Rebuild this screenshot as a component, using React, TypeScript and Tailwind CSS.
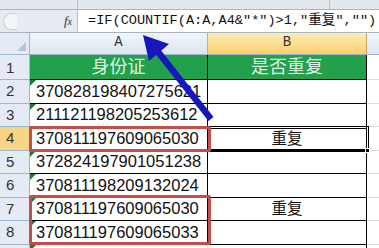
import React from "react";

const rows = [
  { n: 2, id: "370828198407275621", dup: "" },
  { n: 3, id: "211121198205253612", dup: "" },
  { n: 4, id: "370811197609065030", dup: "重复" },
  { n: 5, id: "372824197901051238", dup: "" },
  { n: 6, id: "370811198209132024", dup: "" },
  { n: 7, id: "370811197609065030", dup: "重复" },
  { n: 8, id: "370811197609065033", dup: "" },
];

const sans = { fontFamily: "'Liberation Sans', 'Noto Sans CJK SC', sans-serif" };
const mono = { fontFamily: "'Liberation Mono', 'Noto Sans CJK SC', monospace" };

function Tri() {
  return (
    <div className="absolute left-0 top-0 w-0 h-0 border-t-[6px] border-t-[#1f7a37] border-r-[6px] border-r-transparent" />
  );
}

export default function App() {
  return (
    <div className="relative w-[379px] h-[248px] overflow-hidden bg-white" style={sans}>
      {/* top strip */}
      <div className="flex h-[10px] bg-[#e3e8ee] border-b border-[#a8b4c2]">
        <div className="w-[78px] border-r border-[#b9c3cf]" />
        <div className="w-[252px] border-r border-[#b9c3cf]" />
      </div>

      {/* formula bar */}
      <div className="flex h-[23px] bg-[#e6ebf1] border-b border-[#a8b4c2]">
        <div className="w-[78px] flex items-center border-r border-[#b9c3cf]">
          <div className="ml-[3px] w-[14px] h-[17px] rounded-l-full border-l border-t border-b border-[#c6ced8] bg-[#f3f5f8]" />
          <span className="ml-auto mr-[5px] italic text-[13px] text-[#333]" style={{ fontFamily: "'Liberation Serif', serif" }}>
            f<span className="text-[10px]">x</span>
          </span>
        </div>
        <div className="flex-1 bg-white flex items-center pl-[10px] text-[13.6px] text-[#111] whitespace-nowrap" style={mono}>
          =IF(COUNTIF(A:A,A4&"*")&gt;1,"重复","")
        </div>
      </div>

      {/* column headers */}
      <div className="flex h-[22px] border-b border-[#9eb6ce]">
        <div className="relative w-[30px] bg-[#e4ebf4] border-r border-[#9eb6ce]">
          <div className="absolute right-[3px] bottom-[3px] w-0 h-0 border-b-[9px] border-b-[#b7c3d0] border-l-[9px] border-l-transparent" />
        </div>
        <div className="w-[178px] flex items-end justify-center pb-[1px] bg-gradient-to-b from-[#f1f5fa] to-[#dde6f1] border-r border-[#9eb6ce] text-[14px] text-[#333]" style={mono}>
          A
        </div>
        <div className="w-[159px] flex items-end justify-center pb-[1px] bg-gradient-to-b from-[#fdeeb6] to-[#f8cf68] border-r border-[#c9a55a] text-[14px] text-[#333]" style={mono}>
          B
        </div>
        <div className="flex-1 bg-gradient-to-b from-[#f1f5fa] to-[#dde6f1]" />
      </div>

      {/* row 1 */}
      <div className="flex h-[25px]">
        <div className="w-[30px] bg-[#e4ebf4] border-r border-b border-[#9eb6ce] flex items-end pl-[6px] text-[15px] text-[#333]">1</div>
        <div className="w-[178px] bg-[#22a04b] border-r border-b border-black flex items-center justify-center text-[18px] text-[#dff5e3]">身份证</div>
        <div className="w-[159px] bg-[#22a04b] border-r border-b border-black flex items-center justify-center text-[18px] text-[#dff5e3]">是否重复</div>
        <div className="flex-1 border-b border-[#d8dde3]" />
      </div>

      {rows.map((r) => (
        <div key={r.n} className="flex h-[23.5px]">
          <div
            className={`w-[30px] border-r border-b border-[#9eb6ce] flex items-end pl-[6px] text-[15px] text-[#333] ${
              r.n === 4 ? "bg-[#f8d585]" : "bg-[#e4ebf4]"
            }`}
          >
            {r.n}
          </div>
          <div className="relative w-[178px] border-r border-b border-black flex items-center pl-[6px] text-[16.5px] text-[#111]">
            {r.n !== 4 && <Tri />}
            {r.id}
          </div>
          <div className="w-[159px] border-r border-b border-black flex items-center justify-center text-[15.5px] text-[#111]">
            {r.dup}
          </div>
          <div className="flex-1 border-b border-[#d8dde3]" />
        </div>
      ))}

      {/* row 9 */}
      <div className="flex h-[10px]">
        <div className="w-[30px] bg-[#e4ebf4] border-r border-[#9eb6ce]" />
        <div className="relative w-[178px] border-r border-[#d8dde3]">
          <Tri />
        </div>
        <div className="w-[159px] border-r border-black" />
      </div>

      {/* active cell B4 */}
      <div className="absolute left-[207px] top-[125.5px] w-[162px] h-[26px] border-[3px] border-double border-black" />
      <div className="absolute left-[365px] top-[148px] w-[5px] h-[5px] bg-black border border-white" />

      {/* red boxes */}
      <div className="absolute left-[29px] top-[125.5px] w-[182px] h-[26px] border-[3px] border-[#c0504d] rounded-[2px]" />
      <div className="absolute left-[29px] top-[195px] w-[182px] h-[50px] border-[3px] border-[#c0504d] rounded-[2px]" />

      {/* arrow */}
      <svg className="absolute left-0 top-0" width="379" height="248" viewBox="0 0 379 248">
        <line x1="211" y1="119" x2="155" y2="48" stroke="#1616bd" strokeWidth="6.5" strokeLinecap="butt" />
        <polygon points="143,35 169,44 149,61" fill="#1616bd" />
      </svg>
    </div>
  );
}
